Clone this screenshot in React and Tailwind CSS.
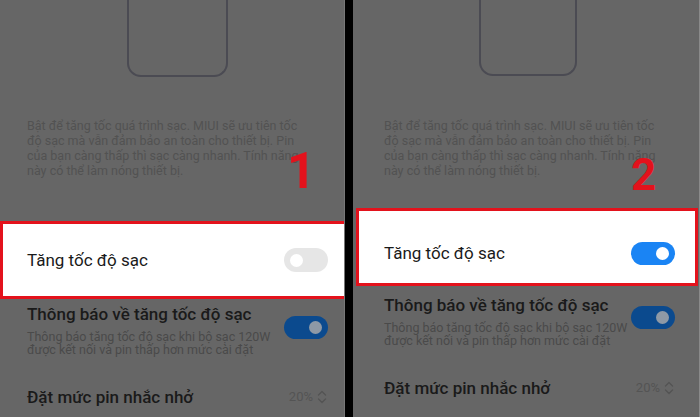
import React from "react";

const font = { fontFamily: "Roboto, 'Noto Sans', 'Liberation Sans', sans-serif" };

function Chevrons() {
  return (
    <svg width="10" height="14" viewBox="0 0 10 14" fill="none" stroke="#545454" strokeWidth="1.4" strokeLinecap="round" strokeLinejoin="round">
      <path d="M1.5 5 L5 1.5 L8.5 5" />
      <path d="M1.5 9 L5 12.5 L8.5 9" />
    </svg>
  );
}

function Toggle({ variant }) {
  if (variant === "off") {
    return (
      <div className="w-[44px] h-[24px] rounded-full bg-[#e6e6e6] flex items-center pl-[6px] shrink-0">
        <div className="w-[13px] h-[13px] rounded-full bg-white" />
      </div>
    );
  }
  if (variant === "on") {
    return (
      <div className="w-[44px] h-[23px] rounded-full bg-[#1a84f4] flex items-center justify-end pr-[6px] shrink-0">
        <div className="w-[13px] h-[13px] rounded-full bg-white" />
      </div>
    );
  }
  return (
    <div className="w-[44px] h-[23px] rounded-full bg-[#0b4a8e] flex items-center justify-end pr-[6px] shrink-0">
      <div className="w-[13px] h-[13px] rounded-full bg-[#8e99a6]" />
    </div>
  );
}

function Description({ className }) {
  return (
    <div className={"text-[12.5px] leading-[15px] text-[#525252] whitespace-nowrap " + className}>
      <div>Bật để tăng tốc quá trình sạc. MIUI sẽ ưu tiên tốc</div>
      <div>độ sạc mà vẫn đảm bảo an toàn cho thiết bị. Pin</div>
      <div>của bạn càng thấp thì sạc càng nhanh. Tính năng</div>
      <div>này có thể làm nóng thiết bị.</div>
    </div>
  );
}

function NotifyRow({ pl, pr, mt, toggleMt }) {
  return (
    <div className={"flex items-start justify-between " + pl + " " + pr + " " + mt}>
      <div>
        <div className="text-[17px] leading-[20px] font-medium text-[#1a1a1a] whitespace-nowrap">
          Thông báo về tăng tốc độ sạc
        </div>
        <div className="mt-[6px] text-[12.5px] leading-[13px] text-[#4a4a4a] whitespace-nowrap">
          <div>Thông báo tăng tốc độ sạc khi bộ sạc 120W</div>
          <div>được kết nối và pin thấp hơn mức cài đặt</div>
        </div>
      </div>
      <div className={toggleMt}>
        <Toggle variant="dim" />
      </div>
    </div>
  );
}

function LevelRow({ pl, pr, mt }) {
  return (
    <div className={"flex items-center justify-between " + pl + " " + pr + " " + mt}>
      <div className="text-[17px] leading-[20px] font-medium text-[#1a1a1a] whitespace-nowrap">
        Đặt mức pin nhắc nhở
      </div>
      <div className="flex items-center gap-[4px] text-[13px] text-[#545454]">
        <span>20%</span>
        <Chevrons />
      </div>
    </div>
  );
}

export default function App() {
  return (
    <div className="w-[700px] h-[417px] flex bg-black overflow-hidden" style={font}>
      {/* Left panel */}
      <div className="relative w-[345px] h-full bg-[#666666] flex flex-col overflow-hidden border-r border-[#777777]">
        <div className="ml-[127px] w-[101px] h-[77px] border-2 border-t-0 border-[#4b4b53] rounded-b-[14px] shrink-0" />
        <Description className="mt-[41px] ml-[27px]" />
        <div className="absolute left-[287px] top-[146px] text-[50px] leading-[50px] font-bold text-[#e3121c]">1</div>
        <div className="mt-[43px] h-[78px] border-[3px] border-r-0 border-[#e3121c] bg-white flex items-center justify-between pl-[24px] pr-[16px] shrink-0">
          <div className="text-[17px] leading-[20px] text-[#1a1a1a] whitespace-nowrap">Tăng tốc độ sạc</div>
          <Toggle variant="off" />
        </div>
        <NotifyRow pl="pl-[27px]" pr="pr-[16px]" mt="mt-[5px]" toggleMt="mt-[12px]" />
        <LevelRow pl="pl-[27px]" pr="pr-[17px]" mt="mt-[31px]" />
      </div>

      {/* Divider */}
      <div className="w-[8px] h-full bg-black shrink-0" />

      {/* Right panel */}
      <div className="relative flex-1 h-full bg-[#666666] flex flex-col overflow-hidden border-r border-[#8a8a8a]">
        <div className="ml-[126px] w-[98px] h-[76px] border-2 border-t-0 border-[#4b4b53] rounded-b-[14px] shrink-0" />
        <Description className="mt-[42px] ml-[31px]" />
        <div className="absolute left-[278px] top-[150px] text-[44px] leading-[50px] font-bold text-[#e3121c]">2</div>
        <div className="mt-[30px] ml-[3px] mr-[1px] h-[78px] border-[3px] border-[#e3121c] bg-white flex items-center justify-between pl-[25px] pr-[20px] pt-[12px] shrink-0">
          <div className="text-[17px] leading-[20px] text-[#1a1a1a] whitespace-nowrap">Tăng tốc độ sạc</div>
          <Toggle variant="on" />
        </div>
        <NotifyRow pl="pl-[31px]" pr="pr-[24px]" mt="mt-[9px]" toggleMt="mt-[11px]" />
        <LevelRow pl="pl-[31px]" pr="pr-[25px]" mt="mt-[31px]" />
      </div>
    </div>
  );
}
